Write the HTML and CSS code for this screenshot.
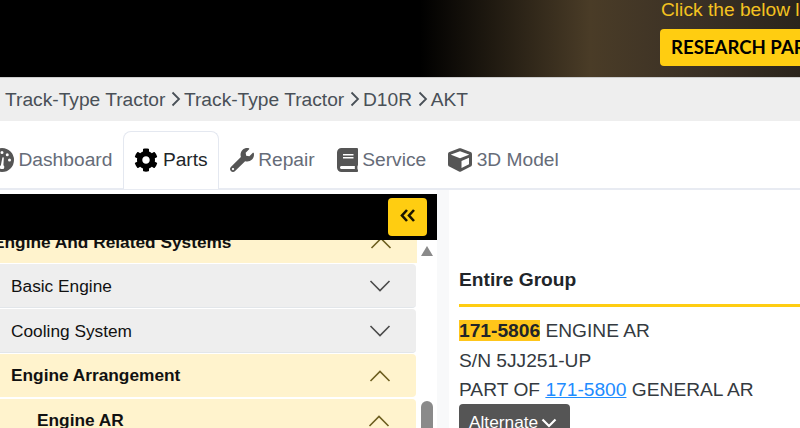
FILE: index.html
```html
<!DOCTYPE html>
<html lang="en">
<head>
<meta charset="utf-8">
<title>Parts</title>
<link rel="stylesheet" href="styles.css">
</head>
<body>
<header class="banner">
  <div class="promo">
    <p class="promo-text">Click the below link to research parts</p>
    <a class="promo-btn">RESEARCH PARTS</a>
  </div>
</header>
<nav class="crumbs">
  <span>Track-Type Tractor</span>
  <svg class="crumb-sep" viewBox="0 0 10 16"><path d="M1.500 1.500L8 8l-6.500 6.500"/></svg>
  <span>Track-Type Tractor</span>
  <svg class="crumb-sep" viewBox="0 0 10 16"><path d="M1.500 1.500L8 8l-6.500 6.500"/></svg>
  <span>D10R</span>
  <svg class="crumb-sep" viewBox="0 0 10 16"><path d="M1.500 1.500L8 8l-6.500 6.500"/></svg>
  <span>AKT</span>
</nav>
<div class="tabs">
  <a class="tab">
    <svg class="ico" viewBox="0 0 512 512"><path d="M256 0a256 256 0 1 0 0 512 256 256 0 0 0 0-512zm0 64a32 32 0 1 1 0 64 32 32 0 0 1 0-64zM96 288a32 32 0 1 1 0-64 32 32 0 0 1 0 64zm48-112a32 32 0 1 1 0-64 32 32 0 0 1 0 64zm144 272h-64c-18-22-20-62 8-82l30-154a16 16 0 0 1 32 6l-8 148c26 20 24 62 2 82zm80-272a32 32 0 1 1 0-64 32 32 0 0 1 0 64zm48 112a32 32 0 1 1 0-64 32 32 0 0 1 0 64z"/></svg>
    Dashboard</a>
  <a class="tab active">
    <svg class="ico" viewBox="0 0 512 512"><path d="M487.4 315.7l-42.6-24.6c4.3-23.2 4.3-47 0-70.2l42.6-24.6c4.9-2.8 7.1-8.6 5.5-14-11.1-35.6-30-67.8-54.7-94.6-3.8-4.1-10-5.1-14.8-2.3L380.8 110c-17.9-15.4-38.5-27.3-60.8-35.1V25.8c0-5.6-3.9-10.5-9.4-11.7-36.7-8.2-74.3-7.8-109.2 0-5.5 1.2-9.4 6.1-9.4 11.7V75c-22.2 7.9-42.8 19.8-60.8 35.1L88.7 85.5c-4.9-2.8-11-1.9-14.8 2.3-24.7 26.7-43.6 58.9-54.7 94.6-1.7 5.4.6 11.2 5.5 14L67.3 221c-4.3 23.2-4.3 47 0 70.2l-42.6 24.6c-4.9 2.8-7.1 8.6-5.5 14 11.1 35.6 30 67.8 54.7 94.6 3.8 4.1 10 5.1 14.8 2.3l42.6-24.6c17.9 15.4 38.5 27.3 60.8 35.1v49.2c0 5.6 3.9 10.5 9.4 11.7 36.7 8.2 74.3 7.8 109.2 0 5.5-1.2 9.4-6.1 9.4-11.7v-49.2c22.2-7.9 42.8-19.8 60.8-35.1l42.6 24.6c4.9 2.8 11 1.9 14.8-2.3 24.7-26.7 43.6-58.9 54.7-94.6 1.5-5.5-.7-11.3-5.6-14.1zM256 336c-44.1 0-80-35.9-80-80s35.9-80 80-80 80 35.9 80 80-35.9 80-80 80z"/></svg>
    Parts</a>
  <a class="tab">
    <svg class="ico" viewBox="0 0 512 512"><path d="M507.73 109.1c-2.24-9.03-13.54-12.09-20.12-5.51l-74.36 74.36-67.88-11.31-11.31-67.88 74.36-74.36c6.62-6.62 3.43-17.9-5.66-20.16-47.38-11.74-99.55.91-136.58 37.93-39.64 39.64-50.55 97.1-34.05 147.2L18.74 402.76c-24.99 24.99-24.99 65.51 0 90.5 24.99 24.99 65.51 24.99 90.5 0l213.21-213.21c50.12 16.71 107.47 5.68 147.37-34.22 37.07-37.07 49.7-89.32 37.91-136.73zM64 472c-13.25 0-24-10.75-24-24 0-13.26 10.75-24 24-24s24 10.74 24 24c0 13.25-10.75 24-24 24z"/></svg>
    Repair</a>
  <a class="tab">
    <svg class="ico ico-book" viewBox="0 0 448 512"><path d="M448 360V24c0-13.3-10.7-24-24-24H96C43 0 0 43 0 96v320c0 53 43 96 96 96h328c13.3 0 24-10.7 24-24v-16c0-7.5-3.5-14.3-8.9-18.7-4.2-15.4-4.2-59.3 0-74.7 5.4-4.3 8.9-11.1 8.9-18.6zM128 134c0-3.3 2.7-6 6-6h212c3.3 0 6 2.7 6 6v20c0 3.3-2.7 6-6 6H134c-3.3 0-6-2.7-6-6v-20zm0 64c0-3.3 2.7-6 6-6h212c3.3 0 6 2.7 6 6v20c0 3.3-2.7 6-6 6H134c-3.3 0-6-2.7-6-6v-20zm253.4 250H96c-17.7 0-32-14.3-32-32 0-17.6 14.4-32 32-32h285.4c-1.9 17.1-1.9 46.9 0 64z"/></svg>
    Service</a>
  <a class="tab">
    <svg class="ico" viewBox="0 0 512 512"><path d="M239.1 6.3l-208 78c-18.7 7-31.1 25-31.1 45v225.1c0 18.2 10.3 34.8 26.5 42.9l208 104c13.5 6.8 29.4 6.8 42.9 0l208-104c16.3-8.1 26.5-24.8 26.5-42.9V129.3c0-20-12.4-37.9-31.1-44.9l-208-78C262 2.2 250 2.2 239.1 6.3zM256 68.4l192 72v1.1l-192 78-192-78v-1.1l192-72zm32 356V275.5l160-65v133.9l-160 80z"/></svg>
    3D Model</a>
</div>
<main class="workspace">
  <aside class="side">
    <div class="side-bar">
      <button class="collapse" type="button"><svg viewBox="0 0 16 14"><path d="M7 1.500L2 7l5 5.500M14 1.500L9 7l5 5.500"/></svg></button>
    </div>
    <div class="side-body">
      <div class="tree">
        <div class="row open top"><b>Engine And Related Systems</b><svg class="chev" viewBox="0 0 22 12"><path d="M1.500 11L11 1.500 20.500 11"/></svg></div>
        <div class="row closed"><span>Basic Engine</span><svg class="chev" viewBox="0 0 22 12"><path d="M1.500 1L11 10.500 20.500 1"/></svg></div>
        <div class="row closed"><span>Cooling System</span><svg class="chev" viewBox="0 0 22 12"><path d="M1.500 1L11 10.500 20.500 1"/></svg></div>
        <div class="row open"><b>Engine Arrangement</b><svg class="chev" viewBox="0 0 22 12"><path d="M1.500 11L11 1.500 20.500 11"/></svg></div>
        <div class="row open nested"><b>Engine AR</b><svg class="chev" viewBox="0 0 22 12"><path d="M1.500 11L11 1.500 20.500 11"/></svg></div>
      </div>
      <div class="scroll">
        <span class="scroll-up"></span>
        <span class="scroll-thumb"></span>
      </div>
    </div>
  </aside>
  <div class="gutter"></div>
  <section class="detail">
    <h2 class="detail-title">Entire Group</h2>
    <p class="line"><mark>171-5806</mark> ENGINE AR</p>
    <p class="line">S/N 5JJ251-UP</p>
    <p class="line">PART OF <a class="link">171-5800</a> GENERAL AR</p>
    <button class="alt" type="button">Alternate <svg viewBox="0 0 16 10"><path d="M1.500 1.500L8 8l6.500-6.500"/></svg></button>
  </section>
</main>
</body>
</html>
```
FILE: styles.css
```css
* { box-sizing: border-box; }
html, body { margin: 0; height: 428px; overflow: hidden; background: #fff; }
body { width: 800px; font-family: "Liberation Sans", Arial, sans-serif; color: #212529; }
p, h2 { margin: 0; }

.banner {
  height: 78px;
  display: flex;
  padding-left: 660px;
  background: linear-gradient(90deg, #000 0, #000 420px, #4a3c27 590px, #3a3025 700px, #2a241c 800px);
  overflow: hidden;
  border-bottom: 1px solid #ccc;
}
.promo { width: 400px; flex: none; }
.promo-text { color: #f4c220; font-size: 19.200px; line-height: 20px; white-space: nowrap; margin-bottom: 9px; padding-left: 1px; }
.promo-btn {
  display: block; width: 220px; height: 37px; padding-left: 11px;
  background: #ffcd11; border-radius: 4px; color: #000;
  font: 700 18.600px/36px Lato, sans-serif; white-space: nowrap;
}

.crumbs {
  height: 43px; background: #eee; display: flex; align-items: center;
  padding: 0 0 0 5px; font-size: 19.200px; color: #495057;
}
.crumb-sep { width: 10px; height: 16px; margin: 0 3px 0 5.700px; fill: none; stroke: #495057; stroke-width: 1.800; position: relative; top: -1px; }

.tabs {
  height: 69px; display: flex; align-items: flex-end; margin-left: -21px; width: 821px;
  border-bottom: 2px solid #e8ebf2; font-size: 19.200px;
}
.tab { display: flex; align-items: center; gap: 4.500px; height: 58px; padding: 0 10px 1px; margin-bottom: -1px; border: 1px solid transparent; border-bottom: 0; color: #666c78; }
.tab.active { background: #fff; border-color: #e4e8f0; border-radius: 8px 8px 0 0; color: #212529; }
.ico { width: 24px; height: 24px; fill: #555; flex: none; }
.ico-book { width: 21px; }
.active .ico { fill: #000; }

.workspace { display: flex; height: 238px; }
.side { width: 437px; flex: none; }
.side-bar { height: 46px; background: #000; margin-top: 4px; display: flex; justify-content: flex-end; align-items: center; padding-right: 10px; }
.collapse { width: 39px; height: 38px; background: #ffcd11; border: 0; border-radius: 4px; padding: 0; display: flex; align-items: center; justify-content: center; }
.collapse svg { width: 16px; height: 15px; fill: none; stroke: #1a1500; stroke-width: 2.600; position: relative; top: -2px; }

.side-body { display: flex; height: 188px; overflow: hidden; }
.tree { width: 417px; flex: none; }
.row { display: flex; align-items: center; justify-content: space-between; padding: 0 25px 0 11px; height: 44px; font-size: 17.300px; color: #111; margin-bottom: 1px; border-radius: 0 4px 4px 0; }
.row.top { height: 23px; margin-bottom: 1px; align-items: flex-start; border-radius: 0; width: 417px; }
.row.top b { margin-left: -18px; position: relative; top: -8px; }
.row.top .chev { position: relative; top: -3px; }
.closed { background: #eee; border-bottom: 1px solid #e2e6ea; width: 416px; padding-top: 1px; }
.open { background: #fff3cd; }
.row.open:not(.top) { width: 416px; height: 43px; margin-bottom: 2px; }
.row.nested { width: 415px; padding-left: 37px; padding-right: 26px; }
.chev { width: 22px; height: 12px; fill: none; stroke: #4b4b4b; stroke-width: 1.600; flex: none; }
.open .chev { stroke: #6e5f20; }

.scroll { width: 20px; flex: none; padding: 6px 0 0 4px; }
.scroll-up { display: block; width: 0; height: 0; border: 6.500px solid transparent; border-top: 0; border-bottom: 10px solid #8a8a8a; }
.scroll-thumb { display: block; width: 12px; height: 60px; margin-top: 145px; background: #8a8a8a; border-radius: 6px; }

.gutter { width: 12px; flex: none; background: #f8f9fa; }

.detail { flex: 1; padding: 79px 0 0 10px; font-size: 19.200px; }
.detail-title { font-size: 19.200px; font-weight: 700; line-height: 22px; padding-bottom: 13px; border-bottom: 3px solid #ffcd11; margin-bottom: 9px; color: #212529; }
.line { line-height: 29.500px; height: 29.500px; color: #343a40; white-space: nowrap; }
mark { background: #ffc61a; color: #212529; font-weight: 700; }
.link { color: #1e8cff; text-decoration: underline; }
.alt {
  display: flex; align-items: center; gap: 3px; height: 38px; width: 111px; padding: 0 0 0 10px; margin-top: -1px;
  background: #555; border: 0; border-radius: 4px 4px 0 0; color: #fff; font: 17.300px "Liberation Sans", sans-serif;
}
.alt svg { width: 16px; height: 10px; fill: none; stroke: #fff; stroke-width: 2.200; flex: none; }
```
